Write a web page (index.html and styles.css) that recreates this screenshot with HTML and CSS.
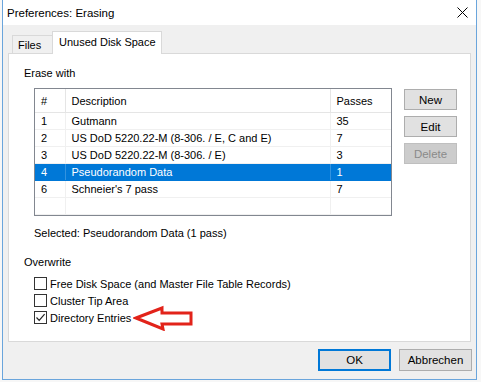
FILE: index.html
```html
<!DOCTYPE html>
<html lang="en">
<head>
    <meta charset="UTF-8">
    <title>Preferences: Erasing</title>
    <link rel="stylesheet" href="styles.css">
</head>
<body>
    <div class="window">
        <div class="titlebar">
            <span class="title">Preferences: Erasing</span>
            <svg class="close" width="11" height="11" viewBox="0 0 11 11">
                <path d="M0.5 0.5 L10.5 10.5 M10.5 0.5 L0.5 10.5" stroke="#000" stroke-width="1"/>
            </svg>
        </div>

        <div class="body">
            <div class="tabs">
                <div class="tab">Files</div>
                <div class="tab active">Unused Disk Space</div>
            </div>

            <div class="panel">
                <div class="label">Erase with</div>

                <div class="erase-row">
                    <div class="list">
                        <table>
                            <colgroup>
                                <col class="c-num">
                                <col class="c-desc">
                                <col class="c-pass">
                            </colgroup>
                            <thead>
                                <tr><th>#</th><th>Description</th><th>Passes</th></tr>
                            </thead>
                            <tbody>
                                <tr><td>1</td><td>Gutmann</td><td>35</td></tr>
                                <tr><td>2</td><td>US DoD 5220.22-M (8-306. / E, C and E)</td><td>7</td></tr>
                                <tr><td>3</td><td>US DoD 5220.22-M (8-306. / E)</td><td>3</td></tr>
                                <tr class="selected"><td>4</td><td>Pseudorandom Data</td><td>1</td></tr>
                                <tr><td>6</td><td>Schneier's 7 pass</td><td>7</td></tr>
                                <tr class="empty"><td></td><td></td><td></td></tr>
                            </tbody>
                        </table>
                    </div>

                    <div class="side-buttons">
                        <button class="btn">New</button>
                        <button class="btn">Edit</button>
                        <button class="btn" disabled>Delete</button>
                    </div>
                </div>

                <div class="selected-text">Selected: Pseudorandom Data (1 pass)</div>

                <div class="label overwrite">Overwrite</div>

                <div class="checks">
                    <div class="check"><span class="box"></span>Free Disk Space (and Master File Table Records)</div>
                    <div class="check"><span class="box"></span>Cluster Tip Area</div>
                    <div class="check">
                        <span class="box">
                            <svg width="11" height="11" viewBox="0 0 11 11">
                                <path d="M1.5 5.5 L4.2 8.3 L9.6 2.2" fill="none" stroke="#222" stroke-width="1.2"/>
                            </svg>
                        </span>
                        Directory Entries
                        <svg class="arrow" width="62" height="26" viewBox="0 0 62 26">
                            <polygon points="3,13 29,3 29,8 58,8 58,19 29,19 30,24" fill="#fff" stroke="#e2231a" stroke-width="3" stroke-linejoin="miter"/>
                        </svg>
                    </div>
                </div>
            </div>

            <div class="footer">
                <button class="btn wide default">OK</button>
                <button class="btn wide">Abbrechen</button>
            </div>
        </div>
    </div>
</body>
</html>
```

FILE: styles.css
```css
body{
    margin: 0;
    background: #f7f7f7;
    font-family: "Liberation Sans", Arial, sans-serif;
    font-size: 11px;
    color: #000;
}

.window{
    margin-left: 2px;
    width: 475px;
    height: 380px;
    box-sizing: border-box;
    border: 1px solid #6aa5dc;
    border-top: none;
    background: #f0f0f0;
    display: flex;
    flex-direction: column;
}

.titlebar{
    height: 25px;
    background: #fff;
    display: flex;
    align-items: center;
    justify-content: space-between;
    padding: 0 8px 0 4px;
}
.title{
    font-size: 11.5px;
}

.body{
    flex: 1;
    display: flex;
    flex-direction: column;
    padding: 7px 5px 0 5px;
}

.tabs{
    display: flex;
    align-items: flex-end;
    height: 21px;
    padding-left: 4px;
}
.tab{
    height: 17px;
    line-height: 18px;
    padding: 0 5px;
    width: 29px;
    white-space: nowrap;
    border: 1px solid #d9d9d9;
    border-bottom: none;
    background: #f0f0f0;
}
.tab.active{
    position: relative;
    z-index: 1;
    height: 22px;
    line-height: 21px;
    width: auto;
    padding: 0 5px 0 6px;
    margin-bottom: -1px;
    margin-left: -1px;
    background: #fff;
}

.panel{
    height: 289px;
    box-sizing: border-box;
    border: 1px solid #d9d9d9;
    background: #fff;
    padding: 12px 0 0 15px;
}

.label{
    line-height: 15px;
}

.erase-row{
    display: flex;
    margin: 7px 0 0 10px;
}

.list{
    width: 358px;
    height: 128px;
    box-sizing: border-box;
    border: 1px solid #828790;
    overflow: hidden;
}
.list table{
    width: 100%;
    border-collapse: collapse;
    table-layout: fixed;
}
.c-num{ width: 30px; }
.c-pass{ width: 61px; }
.list th{
    height: 23px;
    padding: 0 0 0 6px;
    text-align: left;
    font-weight: normal;
    border-bottom: 1px solid #e5e5e5;
    border-right: 1px solid #e5e5e5;
}
.list th:last-child, .list td:last-child{
    border-right: none;
}
.list td{
    height: 16px;
    padding: 0 0 0 6px;
    white-space: nowrap;
    overflow: hidden;
    border-bottom: 1px solid #f0f0f0;
    border-right: 1px solid #f0f0f0;
}
.list tr.selected td{
    background: #0078d7;
    color: #fff;
    border-bottom-color: #0078d7;
    border-right-color: #3393df;
}

.side-buttons{
    display: flex;
    flex-direction: column;
    gap: 6px;
    margin: 1px 0 0 12px;
}

.btn{
    width: 53px;
    height: 21px;
    padding: 0;
    font-family: inherit;
    font-size: 11.5px;
    color: #000;
    background: #e1e1e1;
    border: 1px solid #adadad;
}
.btn:disabled{
    color: #8a8a8a;
    background: #cccccc;
    border-color: #bfbfbf;
}
.btn.wide{
    width: 73px;
    height: 22px;
}
.btn.default{
    border: 2px solid #0078d7;
}

.selected-text{
    margin: 10px 0 0 10px;
    line-height: 15px;
}

.overwrite{
    margin-top: 14px;
}

.checks{
    margin: 5px 0 0 10px;
}
.check{
    display: flex;
    align-items: center;
    height: 17px;
}
.box{
    width: 13px;
    height: 13px;
    box-sizing: border-box;
    border: 1px solid #333;
    background: #fff;
    margin-right: 3px;
    display: flex;
    align-items: center;
    justify-content: center;
}
.arrow{
    margin-left: 2px;
}

.footer{
    display: flex;
    justify-content: flex-end;
    gap: 8px;
    padding-top: 7px;
    margin-right: -1px;
}
```
